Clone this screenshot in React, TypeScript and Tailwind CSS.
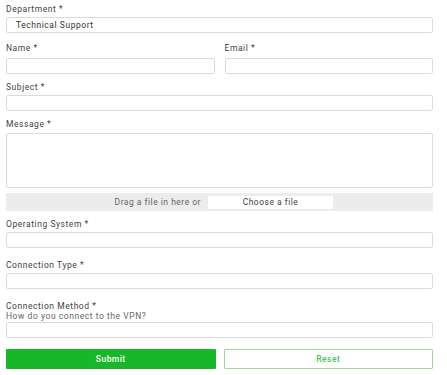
import React from "react";

const label = "block text-[8.5px] leading-[10px] text-[#3f3f3f] font-normal tracking-[0.55px]";
const input = "block w-full h-[16px] border border-[#dcdcdc] rounded-[2px] bg-white";

export default function App() {
  return (
    <div className="w-[447px] h-[375px] bg-white overflow-hidden" style={{ fontFamily: "Roboto, 'Open Sans', sans-serif" }}>
      <div className="w-[427px] ml-[6px] pt-[4px] flex flex-col">
        <label className={label}>Department *</label>
        <div className={`${input} mt-[3px] flex items-center pl-[9px] text-[8.5px] text-[#333] font-normal tracking-[0.55px]`}>Technical Support</div>

        <div className="mt-[10px] grid grid-cols-2 gap-x-[10px]">
          <div>
            <label className={label}>Name *</label>
            <div className={`${input} mt-[5px]`} />
          </div>
          <div>
            <label className={label}>Email *</label>
            <div className={`${input} mt-[5px]`} />
          </div>
        </div>

        <label className={`${label} mt-[8px]`}>Subject *</label>
        <div className={`${input} mt-[3px]`} />

        <label className={`${label} mt-[8px]`}>Message *</label>
        <div className="block w-full h-[55px] mt-[4px] border border-[#dcdcdc] rounded-[2px] bg-white" />

        <div className="mt-[5px] h-[18px] bg-[#ececec] flex items-center">
          <div className="w-[202px] pr-[7px] text-right text-[8.5px] text-[#666] tracking-[0.5px]">Drag a file in here or</div>
          <div className="w-[125px] h-[13px] bg-white flex items-center justify-center text-[8.5px] text-[#444] tracking-[0.5px]">Choose a file</div>
        </div>

        <label className={`${label} mt-[8px]`}>Operating System *</label>
        <div className={`${input} mt-[3px]`} />

        <label className={`${label} mt-[12px]`}>Connection Type *</label>
        <div className={`${input} mt-[3px]`} />

        <label className={`${label} mt-[12px]`}>Connection Method *</label>
        <div className="text-[8.5px] leading-[10px] text-[#666] tracking-[0.55px]">How do you connect to the VPN?</div>
        <div className={`${input} mt-[1px]`} />

        <div className="mt-[11px] grid grid-cols-2 gap-x-[8px]">
          <button className="h-[20px] bg-[#16b82a] text-white text-[8.5px] font-medium rounded-[1px] tracking-[0.45px]">Submit</button>
          <button className="h-[20px] bg-white border border-[#98dca2] text-[#46c85c] text-[8.5px] font-medium rounded-[1px] tracking-[0.45px]">Reset</button>
        </div>
      </div>
    </div>
  );
}
